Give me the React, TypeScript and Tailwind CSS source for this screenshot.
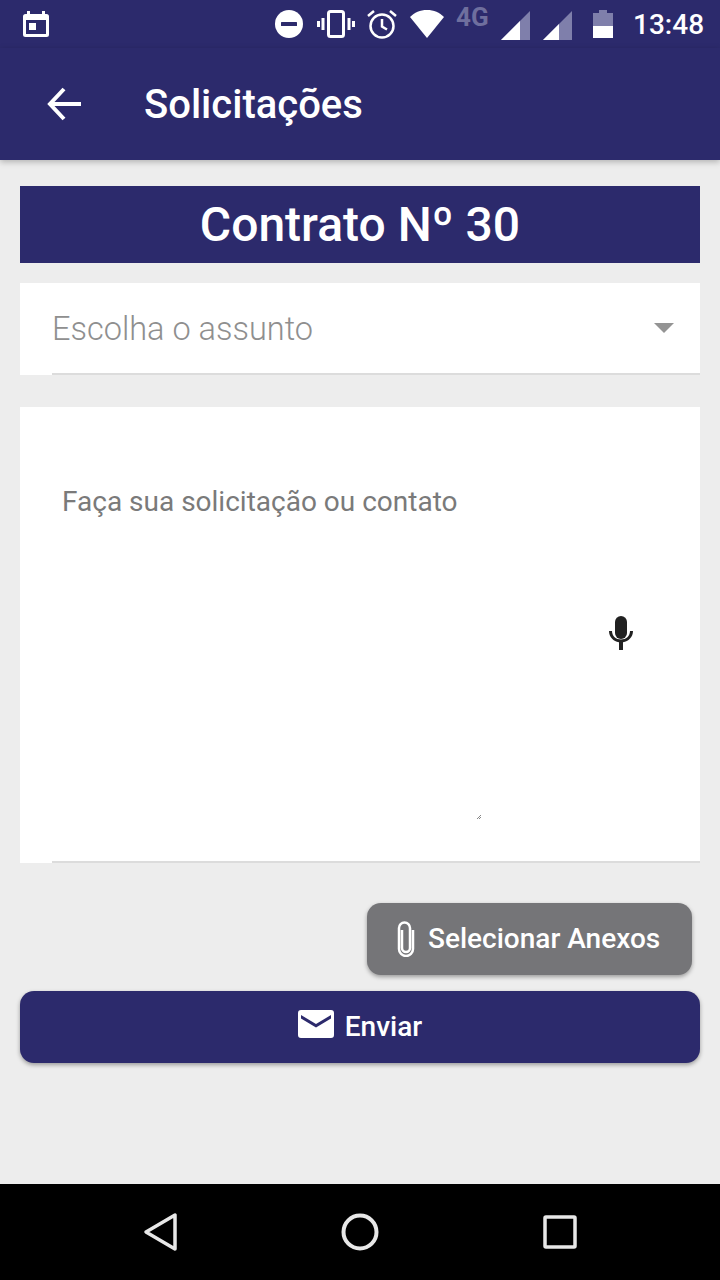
const font = { fontFamily: "Roboto, sans-serif" };

function StatusBar() {
	return (
		<div className="flex h-12 items-center text-white">
			<svg className="ml-[21px] mt-[-2px]" width="30" height="30" viewBox="0 0 30 30" fill="#fff">
				<path fillRule="evenodd" d="M6 3h3v3h12V3h3v3h1.500A2.500 2.500 0 0 1 28 8.500v18a2.500 2.500 0 0 1-2.500 2.500h-21A2.500 2.500 0 0 1 2 26.500v-18A2.500 2.500 0 0 1 4.500 6H6zM5 12v14h20V12z" />
				<rect x="8" y="15" width="7" height="7" />
			</svg>
			<svg className="ml-[223px]" width="30" height="30" viewBox="0 0 30 30">
				<circle cx="15" cy="15" r="14" fill="#fff" />
				<rect x="7" y="13" width="16" height="4" rx="0.500" fill="#2c2a6c" />
			</svg>
			<svg className="ml-[13px]" width="38" height="30" viewBox="0 0 38 30" fill="none" stroke="#fff">
				<rect x="11.500" y="2.500" width="15" height="25" rx="2" strokeWidth="3" />
				<path d="M6 9v12M1.500 12v6M32 9v12M36.500 12v6" strokeWidth="3" />
			</svg>
			<svg className="ml-[11px]" width="32" height="32" viewBox="0 0 32 32" fill="none" stroke="#fff" strokeWidth="2.500">
				<circle cx="16" cy="18" r="11.500" />
				<path d="M16 11v7.500l5 3M2 8l6-5M30 8l-6-5" />
			</svg>
			<svg className="ml-[10px]" width="38" height="30" viewBox="0 0 38 30" fill="#fff">
				<path d="M19 29 2 8C6.500 3.500 12 1 19 1s12.500 2.500 17 7z" />
			</svg>
			<span className="ml-[10px] mt-[-15px] w-[36px] text-[26px] font-bold leading-[28px] text-[#6f6f9e]">4G</span>
			<svg className="ml-[8px] mt-[3px]" width="32" height="32" viewBox="0 0 32 32">
				<path d="M1 30 30 1v29z" fill="#7f7fab" />
				<path d="M1 30 20 11v19z" fill="#fff" />
			</svg>
			<svg className="ml-[10px] mt-[3px]" width="32" height="32" viewBox="0 0 32 32">
				<path d="M1 30 30 1v29z" fill="#7f7fab" />
				<path d="M1 30 17 14v16z" fill="#fff" />
			</svg>
			<svg className="ml-[18px]" width="22" height="30" viewBox="0 0 22 30">
				<path d="M7 1h8v3h6v13H1V4h6z" fill="#7f7fab" />
				<rect x="1" y="17" width="20" height="12" fill="#fff" />
			</svg>
			<span className="ml-[19px] mt-[2px] text-[28px] font-medium leading-none">13:48</span>
		</div>
	);
}

function AppBar() {
	return (
		<div className="relative z-10 flex h-[112px] items-start bg-[#2c2a6c] pt-[34px] shadow-[0_2px_6px_rgba(0,0,0,0.25)]">
			<svg className="ml-[46px]" width="36" height="44" viewBox="0 0 36 44" fill="none" stroke="#fff" strokeWidth="4">
				<path d="M35 22H5M18 7 4 22l14 15" />
			</svg>
			<span className="ml-[62px] mt-px text-[40px] font-medium leading-[44px] text-white">Solicitações</span>
		</div>
	);
}

function NavBar() {
	return (
		<div className="flex h-24 items-center bg-black">
			<svg className="ml-[142px]" width="38" height="40" viewBox="0 0 38 40" fill="none" stroke="#e8e8e8" strokeWidth="3.500" strokeLinejoin="round">
				<path d="M4 20 33 3v34z" />
			</svg>
			<svg className="ml-[160px]" width="40" height="40" viewBox="0 0 40 40" fill="none" stroke="#e8e8e8" strokeWidth="4">
				<circle cx="20" cy="20" r="16.500" />
			</svg>
			<svg className="ml-[162px]" width="36" height="36" viewBox="0 0 36 36" fill="none" stroke="#e8e8e8" strokeWidth="3.500" strokeLinejoin="round">
				<rect x="3" y="3" width="30" height="30" rx="1" />
			</svg>
		</div>
	);
}

export default function App() {
	return (
		<div className="flex h-[1280px] w-[720px] flex-col bg-[#ededed]" style={font}>
			<div className="bg-[#2c2a6c]">
				<StatusBar />
			</div>
			<AppBar />
			<div className="flex flex-1 flex-col px-5 pt-[26px]">
				<div className="flex h-[77px] items-center justify-center bg-[#2c2a6c] text-[48px] font-medium leading-none text-white">
					Contrato Nº 30
				</div>
				<div className="mt-5 h-[92px] bg-white pl-8">
					<div className="flex h-full items-center border-b-2 border-[#dcdcdc] pb-[1px] pr-[26px]">
						<span className="mt-1 flex-1 text-[32.5px] font-light leading-none text-[#8f8f8f]">Escolha o assunto</span>
						<svg width="20" height="10" viewBox="0 0 20 10" fill="#949494">
							<path d="M0 0h20L10 10z" />
						</svg>
					</div>
				</div>
				<div className="mt-8 h-[456px] bg-white pl-8">
					<div className="flex h-full flex-col border-b-2 border-[#dcdcdc]">
						<span className="ml-[10px] mt-[78px] text-[28px] leading-[34px] text-[#7a7a7a]">Faça sua solicitação ou contato</span>
						<svg className="ml-[556px] mt-[97px]" width="26" height="34" viewBox="0 0 26 34" fill="#212121">
							<rect x="7" y="0" width="12" height="23" rx="6" />
							<path d="M1 15h3c0 5 4 8.500 9 8.500s9-3.500 9-8.500h3c0 6-4.500 10.500-10 11.300V34h-4v-7.700C5.500 25.500 1 21 1 15z" />
						</svg>
						<svg className="ml-[425px] mt-[165px]" width="4" height="4" viewBox="0 0 4 4" stroke="#555" strokeWidth="0.700">
							<path d="M0 4l4-4M2 4l2-2" />
						</svg>
					</div>
				</div>
				<button className="mr-2 mt-10 flex h-[72px] w-[325px] items-center self-end rounded-[14px] bg-[#757578] pl-[27px] text-[28px] font-medium text-white shadow-[0_2px_4px_rgba(0,0,0,0.35)]">
					<svg width="24" height="36" viewBox="0 0 24 36" fill="none" stroke="#fff" strokeWidth="2.500">
						<path d="M8 9v18a4 4 0 0 0 8 0V7a5.500 5.500 0 0 0-11 0v21a7 7 0 0 0 14 0V9" />
					</svg>
					<span className="ml-[10px] leading-none">Selecionar Anexos</span>
				</button>
				<button className="mt-4 flex h-[72px] items-center justify-center rounded-[14px] bg-[#2c2a6c] text-[28px] font-medium text-white shadow-[0_2px_4px_rgba(0,0,0,0.35)]">
					<svg className="mb-[6px]" width="36" height="28" viewBox="0 0 36 28" fill="#fff">
						<path fillRule="evenodd" d="M3 0h30a3 3 0 0 1 3 3v22a3 3 0 0 1-3 3H3a3 3 0 0 1-3-3V3a3 3 0 0 1 3-3zm0 5v3.500l15 9 15-9V5L18 14z" />
					</svg>
					<span className="ml-[11px] leading-none">Enviar</span>
				</button>
			</div>
			<NavBar />
		</div>
	);
}
